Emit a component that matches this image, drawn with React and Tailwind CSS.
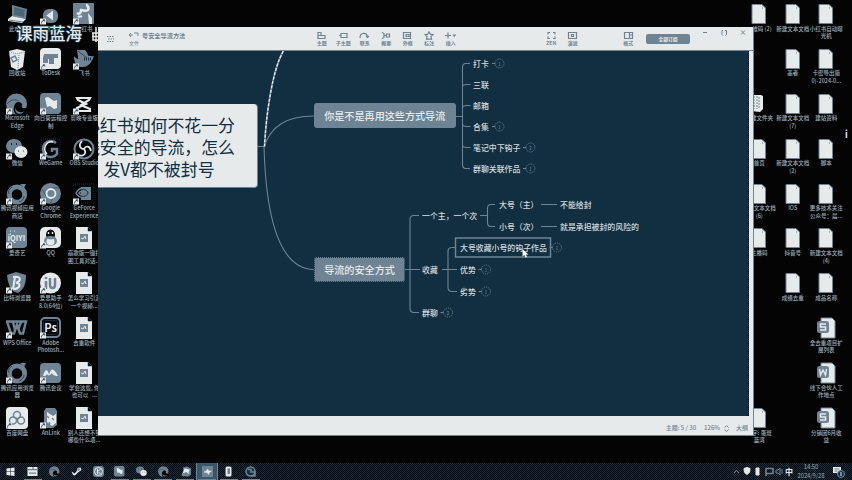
import React from 'react';

const M = '#6e8494';
const L = '#e6eaeb';
const D = '#112f41';
const K = '#040404';

// 22x22 desktop glyphs
const glyphs = {
  pc: (
    <>
      <path d="M6 2l15 4-1 10-14-3z" fill={M} />
      <path d="M8 4l11 3-1 7-10-2z" fill={D} opacity=".35" />
      <path d="M2 16l4-3 14 3-4 4-14-2z" fill={L} />
      <path d="M3 17l14 2" stroke={M} />
    </>
  ),
  play: (
    <>
      <rect x="3" y="6" width="15" height="14" rx="6" fill={M} />
      <path d="M8 12.500l4-3v6z" fill={L} stroke={L} strokeWidth="2" />
    </>
  ),
  flower: (
    <>
      <rect width="21" height="21" x="0" rx="1" fill={M} />
      <path d="M4 10c3 2 4-1 4-3 3 0 4 2 7 0 2-3-2-4-1-6" fill="none" stroke={L} strokeWidth="2.500" />
      <path d="M9 13c-2 1-3 1-4 0" stroke={L} strokeWidth="2" />
      <path d="M15 10l4 5v6h-3z" fill={L} />
    </>
  ),
  bin: (
    <>
      <path d="M3 3l8-2 8 2-2 16-6 3-6-3z" fill={L} />
      <path d="M3 4l8 2 8-2M13 7l-1 13" stroke={M} fill="none" strokeDasharray="1 1" />
      <path d="M5 10l4-2 2 4-4 2z" fill="none" stroke={M} strokeWidth="1.500" />
    </>
  ),
  todesk: (
    <>
      <rect width="21" height="21" rx="4" fill={L} />
      <path d="M4 6h14v4h-4v6H9v-5H8v4H3v-5z" fill={M} />
    </>
  ),
  bird: (
    <>
      <path d="M4 2h8c3 3 3 6 4 9-2 4-6 6-10 6z" fill={M} />
      <path d="M1 8c5 6 9 3 11 1 4-3 6 0 9-1-2 6-6 12-13 11-4 0-7-4-7-11z" fill={M} />
      <path d="M5 3l9 7" stroke={D} strokeWidth=".7" />
      <path d="M11 11h8" stroke={D} strokeWidth="3" strokeDasharray="1 1" />
    </>
  ),
  edge: (
    <>
      <circle cx="10.500" cy="11" r="10.500" fill={M} />
      <path d="M9 11a4 4 0 0 1 7 0c0 2-1 3 1 4h4v4l-6 3c-7 1-9-5-6-11z" fill={K} />
      <path d="M9 15c2 5 7 5 10 3-5 5-10 3-10-3z" fill={M} />
      <path d="M1 11c4-5 8-5 12-3" fill="none" stroke={D} strokeWidth=".6" />
    </>
  ),
  flag: (
    <>
      <rect width="21" height="21" rx="4" fill={M} />
      <path d="M5 5l3-1 6 4 3-1v8l-3 1-4-3-3 1z" fill={L} />
    </>
  ),
  cut: <path d="M4 5h13l-1 2-8 5 9 4v2H4v-3l9-4-8-4z" fill="none" stroke={L} strokeWidth="2.200" />,
  wechat: (
    <>
      <ellipse cx="8" cy="8" rx="8" ry="7" fill={M} />
      <ellipse cx="15" cy="14" rx="6.500" ry="6" fill={L} />
      <path d="M5 6h1M10 6h1" stroke={K} strokeWidth="1.500" />
      <path d="M12 13h1M17 13h1" stroke={M} strokeWidth="1.500" />
    </>
  ),
  wegame: (
    <>
      <rect x="1" y="1" width="19" height="20" fill="none" stroke={D} strokeDasharray="1 1" />
      <path d="M16 5a8 8 0 1 0 1 11v-5h-5v3" fill="none" stroke={M} strokeWidth="2.500" />
      <path d="M13 4a7 7 0 0 0-6 12" fill="none" stroke={L} strokeWidth="1.500" />
    </>
  ),
  obs: (
    <>
      <circle cx="11" cy="11" r="9.500" fill={K} stroke={M} strokeWidth="2" />
      <path d="M9 3c-4 4-2 8 2 8M18 13c-1-5-5-6-7-2M6 17c5 2 8-2 5-6" fill="none" stroke={L} strokeWidth="1.700" />
    </>
  ),
  ring: (
    <>
      <circle cx="11" cy="11.500" r="7.700" fill="none" stroke={M} strokeWidth="4.800" />
      <path d="M6 4c-3 2-4 4-3 7M13 19c3-1 5-3 5-6" fill="none" stroke={D} strokeWidth=".7" />
      <path d="M14 1l4 4 2-4z" fill={M} />
    </>
  ),
  chrome: (
    <>
      <circle cx="10.500" cy="10.500" r="10.500" fill={M} />
      <path d="M11 5h9M6 13L2 6M14 13l-4 8" stroke={D} strokeWidth=".5" />
      <circle cx="11" cy="10.500" r="4.500" fill={M} stroke={L} strokeWidth="1.800" />
    </>
  ),
  nvidia: (
    <>
      <rect y="1" width="21" height="19" fill={K} stroke={D} strokeDasharray="1 1" />
      <path d="M8 4h10v13H8z" fill={M} />
      <path d="M3 10c4-7 11-6 13 0-3 6-10 6-13 0zM6 10c2-3 6-3 7 0-2 3-5 3-7 0z" fill="none" stroke={M} strokeWidth="1.500" />
      <path d="M8 7c3-2 6 0 7 3-1 3-4 4-7 3" fill="none" stroke={D} />
    </>
  ),
  qiyi: (
    <>
      <rect width="21" height="21" rx="4" fill={M} />
      <text x="10.500" y="14" textAnchor="middle" fontSize="7.500" fontWeight="700" fill={L}>iQIYI</text>
      <path d="M4 4h1M8 4h1M4 7h1" stroke={L} />
    </>
  ),
  qq: (
    <>
      <rect width="21" height="21" rx="5" fill={L} />
      <ellipse cx="10.500" cy="8" rx="4.500" ry="5.500" fill={K} />
      <ellipse cx="10.500" cy="14" rx="6.500" ry="5" fill={M} />
      <ellipse cx="10.500" cy="14.500" rx="4" ry="4" fill={L} />
      <path d="M6 10q5 3 9 0" stroke={M} strokeWidth="2" fill="none" />
      <path d="M8.500 5v2M12.500 5v2" stroke={L} strokeWidth="1.500" />
    </>
  ),
  shield: (
    <>
      <path d="M1 3l9-3 10 3c0 9-2 14-8 18-7-1-10-8-11-18z" fill={M} />
      <path d="M7 5c9-1 8 4 3 6 6 0 4 6-3 6M9 5l-2 12" fill="none" stroke={L} strokeWidth="2" />
    </>
  ),
  iu: (
    <>
      <circle cx="10.500" cy="11" r="10.500" fill={L} />
      <path d="M6 9v8M6 5v2M10 6v7c0 4 5 4 5 0V6" fill="none" stroke={M} strokeWidth="2.500" />
    </>
  ),
  doc: (
    <>
      <path d="M3 0h12l4 4v18H3z" fill={L} />
      <path d="M15 0l4 4h-4z" fill={K} stroke={D} strokeWidth=".5" />
      <rect x="7" y="7" width="8" height="8" fill={M} />
      <path d="M8 11l2 1 2-3 1 3" fill="none" stroke={L} />
    </>
  ),
  wps: <path d="M1 4.500h19l-3 12h-3l-3-9-3 9H5zM7 5l2 8M15 5l-3 8" fill="none" stroke={M} strokeWidth="2.400" />,
  ps: (
    <>
      <rect x="1" y="1" width="19" height="19" rx="4" fill={K} stroke={M} strokeWidth="2" />
      <rect x="3.500" y="3.500" width="14" height="14" rx="2" fill={K} stroke={D} />
      <text x="10.500" y="14.500" textAnchor="middle" fontSize="11" fontWeight="600" fill={L}>Ps</text>
    </>
  ),
  meet: (
    <>
      <rect y="1" width="21" height="20" rx="4" fill={M} />
      <path d="M3 14c2-8 5-7 6-1 2-8 5-7 9 1-4 0-5-1-6-3-2 3-4 3-5 1-1 2-2 2-4 2z" fill={L} />
    </>
  ),
  baidu: (
    <>
      <rect width="22" height="22" rx="4" fill={L} />
      <circle cx="11" cy="8" r="3.500" fill="none" stroke={M} strokeWidth="1.500" />
      <circle cx="7" cy="13.500" r="3.500" fill="none" stroke={M} strokeWidth="1.500" />
      <circle cx="15" cy="13.500" r="3.500" fill="none" stroke={M} strokeWidth="1.500" />
    </>
  ),
  phone: (
    <>
      <path d="M6 1h9l2 3v14l-4 3H6l-2-3V4z" fill={M} />
      <path d="M7 5l6 4 3-2v9l-4 3-5-4z" fill={L} />
      <path d="M7 9l2 2M12 11l2 2M9 15l1 2" stroke={M} strokeWidth="1.300" />
    </>
  ),
  page: (
    <>
      <path d="M4 1.500h10l3.500 3.500v15.500H4z" fill={L} stroke={M} />
      <path d="M14 5h1" stroke={M} />
    </>
  ),
  folder: (
    <>
      <path d="M3 2h10l2 1v13l-3 3-9-1z" fill={L} />
      <path d="M6 3v13M9 3v13M11 4v12" stroke={M} strokeDasharray="2 1" />
    </>
  ),
  s: (
    <>
      <path d="M6 1h11l3 3v17H6z" fill={L} stroke={M} />
      <rect x="2" y="4" width="12" height="12" rx="2.500" fill={M} />
      <path d="M11 7H5.500v3h5v3H5" fill="none" stroke={L} strokeWidth="1.500" />
    </>
  ),
  w: (
    <>
      <path d="M6 1h11l3 3v17H6z" fill={L} stroke={M} />
      <rect x="2" y="4" width="12" height="12" rx="2.500" fill={M} />
      <path d="M4.500 7l1 6 2.500-5 2.500 5 1-6" fill="none" stroke={L} strokeWidth="1.400" />
    </>
  ),
};

const leftCols = [
  [
    ['pc', '此电脑'], ['bin', '回收站'], ['edge', 'Microsoft\nEdge', 1], ['wechat', '微信', 1], ['ring', '腾讯视频应用\n商店', 1],
    ['qiyi', '爱奇艺', 1], ['shield', '比特浏览器', 1], ['wps', 'WPS Office', 1], ['ring', '腾讯应用浏览\n器', 1], ['baidu', '百度网盘', 1],
  ],
  [
    ['play', '腾讯视频', 1], ['todesk', 'ToDesk', 1], ['flag', '向日葵远程控\n制', 1], ['wegame', 'WeGame', 1], ['chrome', 'Google\nChrome', 1],
    ['qq', 'QQ', 1], ['iu', '爱思助手\n8.0(64位)', 1], ['ps', 'Adobe\nPhotosh...', 1], ['meet', '腾讯会议', 1], ['phone', 'AnLink', 1],
  ],
  [
    ['flower', '小红书', 1], ['bird', '飞书', 1], ['cut', '剪映专业版', 1], ['obs', 'OBS Studio', 1], ['nvidia', 'GeForce\nExperience', 1],
    ['doc', '高歌版一键打\n图工具对话...'], ['doc', '怎么学习引流\n一个视频...'], ['doc', '去重软件'], ['doc', '学会这些, 你\n也可以   ...'], ['doc', '别人还想不到\n哪些什么项...'],
  ],
];

const rightCols = [
  [
    ['page', '二维码 (2)'], null, ['folder', '新建文件夹'], ['page', '首页'], ['page', '新建文本文档\n(6)'],
    ['page', '主播码'], null, null, null, ['page', '文字: 蛋斑\n蓝湾'],
  ],
  [
    ['page', '新建文本文档'], ['page', '墨者'], ['page', '新建文本文档\n(7)'], ['page', '新建文本文档\n(2)'], ['page', 'IOS'],
    ['page', '抖音号'], ['page', '成绩去重'], null, null, null,
  ],
  [
    ['page', '小红书自动曝\n光机'], ['page', '卡密导出简\n0)-2024-0...'], ['page', '建站资料'], ['page', '脚本'], ['page', '更多技术关注\n公众号：晨...'],
    ['page', '新建文本文档\n(4)'], ['page', '成品名称'], ['s', '全去重项目扩\n展列表'], ['w', '线下合伙人工\n作地点'], ['s', '分销团6月收\n益'],
  ],
];

function Shortcut() {
  return (
    <svg width="7" height="7" viewBox="0 0 7 7" className="absolute left-0 bottom-0">
      <rect width="6" height="6" y=".5" fill={L} />
      <path d="M1.500 5.500c0-2 1-3 2.500-3M3 1.800h1.700v1.700" fill="none" stroke={D} strokeWidth=".8" />
    </svg>
  );
}

function DesktopGrid({ cols, className }) {
  return (
    <div className={`absolute top-[3px] flex ${className}`}>
      {cols.map((col, i) => (
        <div key={i} className="flex w-[33.5px] flex-col">
          {col.map((item, j) => (
            <div key={j} className="flex h-[44.9px] flex-col items-center">
              {item && (
                <>
                  <div className="relative h-[22px] w-[22px]">
                    <svg width="22" height="22" viewBox="0 0 22 22">{glyphs[item[0]]}</svg>
                    {item[2] && <Shortcut />}
                  </div>
                  <div className="mt-[0.5px] whitespace-pre text-center text-[5.5px] font-medium leading-[7.7px] text-[#9fb0bc]">{item[1]}</div>
                </>
              )}
            </div>
          ))}
        </div>
      ))}
    </div>
  );
}

const tools = [
  ['主题', <path d="M2 1.500h3v3H2zM2 4.500h7v3H2z" />],
  ['子主题', <path d="M3 2.500h6v4H3zM1 4.500h2" />],
  ['联系', <path d="M1 7C1 1 8 1 8.500 6M7 5l1.500 1.500L10 5" />],
  ['概要', <path d="M1 1.500l2 1v4l-2 1M3 4.500h2M5.500 3h3v3h-3z" />],
  ['外框', <path d="M1.500 1.500h7v6h-7zM4 3.500h3v2H4z" />],
  ['标注', <path d="M5 .8l1.300 2.400 2.700.4-2 1.800.5 2.800h-5l.5-2.800L1 3.600l2.700-.4z" />],
  ['插入', <path d="M3 1.500v6M0 4.500h6M8 3.500l1.200 1.500L10.500 3.500" />],
];

function Tool({ label, children, className = 'w-[21.5px]' }) {
  return (
    <div className={`flex flex-col items-center ${className}`}>
      <svg width="11" height="9" viewBox="0 0 11 9" fill="none" stroke={M} strokeWidth="1.200">{children}</svg>
      <span className="-mt-[0.5px] whitespace-nowrap text-[5px] font-bold leading-[6px]">{label}</span>
    </div>
  );
}

function TitleBar() {
  return (
    <div className="flex h-[24px] shrink-0 border-b border-[#6e8494] bg-[#e6eaeb] pt-[4px] text-[#6e8494]">
      <svg width="8" height="8" viewBox="0 0 8 8" className="ml-[9px] mt-[4px]" stroke={M} strokeDasharray="1.500 1">
        <path d="M0 1.500h7M1 4h6M0 6.500h7" />
      </svg>
      <div className="ml-[12px] flex w-[14px] flex-col items-center">
        <svg width="12" height="8" viewBox="0 0 12 8" fill="none" stroke={M}>
          <path d="M3 2L1 4l2 2M1 4h4M6 2h4v3" />
        </svg>
        <span className="text-[5px] leading-[8px]">文件</span>
      </div>
      <div className="w-[170px] pl-px whitespace-nowrap text-[6.2px] font-bold leading-[9px]">号安全导流方法</div>
      <div className="flex">
        {tools.map(([label, icon]) => <Tool key={label} label={label}>{icon}</Tool>)}
      </div>
      <div className="ml-[79px] flex">
        <Tool label="ZEN"><path d="M2 3.500v-2h2M7 1.500h2v2M9 5.500v2H7M4 7.500H2v-2" /></Tool>
        <Tool label="演说"><path d="M1.500 1.500h8v6h-8zM4.500 3.500h2v2h-2z" /></Tool>
      </div>
      <Tool label="格式" className="ml-[34px] w-[21.500px]"><path d="M1.500 1.500h8v6h-8zM6.500 1.500v6M6.500 4h3" /></Tool>
      <div className="ml-[7px] mt-[3px] flex h-[10px] w-[44px] items-center justify-center rounded-[2px] bg-[#6e8494] text-[4.800px] font-bold text-[#e6eaeb]">全部订阅</div>
      <svg width="46" height="8" viewBox="0 0 46 8" className="-mt-[2px] ml-[11px]" fill="none" stroke={M}>
        <path d="M1 3.500h4M21 1.500h-1v4l1 1M23 1.500h1.500v4l-1 1M39 1.500l4 4M43 1.500l-4 4" transform="translate(1 0)" />
      </svg>
    </div>
  );
}

// Map nodes: left edge, top edge, text, centre of the collapsed-count badge
const nodes = [
  ['left-[375px]', 'top-[6.5px]', '打卡', 401.5, 12.500, '1'],
  ['left-[375px]', 'top-[27.5px]', '三联'],
  ['left-[375px]', 'top-[48.5px]', '邮箱'],
  ['left-[375px]', 'top-[69.5px]', '合集', 401.5, 75.500, '1'],
  ['left-[375px]', 'top-[90.5px]', '笔记中下钩子', 432.5, 96.500, '2'],
  ['left-[375px]', 'top-[111.5px]', '群聊关联作品', 432.5, 117.500, '1'],
  ['left-[324px]', 'top-[159px]', '一个主，一个次'],
  ['left-[401px]', 'top-[148px]', '大号（主）'],
  ['left-[401px]', 'top-[170px]', '小号（次）'],
  ['left-[462px]', 'top-[148px]', '不能给封'],
  ['left-[462px]', 'top-[170px]', '就是承担被封的风险的'],
  ['left-[362px]', 'top-[191px]', '大号收藏小号的钩子作品', 459, 196.5, '1'],
  ['left-[324px]', 'top-[212.5px]', '收藏'],
  ['left-[362px]', 'top-[212.5px]', '优势', 388, 218.500, '1'],
  ['left-[362px]', 'top-[234.5px]', '劣势', 388, 240.500, '1'],
  ['left-[324px]', 'top-[255.5px]', '群聊', 350, 261.500, '2'],
];

function MindMap() {
  return (
    <div className="relative h-[365px] w-[651px] overflow-hidden border-r border-dotted border-black bg-[#112f41]">
      <svg width="651" height="365" className="absolute inset-0" fill="none" stroke={M} strokeWidth="1.100">
        <path d="M159 95.500h7M166 95.500C173 76 187 65 216 65M166 95.500C168 167 181 218 216 218.500" />
        <path d="M166.500 95.500C168 66 174 18 186 -1" stroke={M} strokeWidth="1.800" />
        <path d="M166.500 95.500C168 66 174 18 186 -1" stroke={L} strokeWidth="1.300" strokeDasharray="3 1.500" />
        <path d="M357 65.500h7M372 12.500h-4q-3.500 0-3.500 4v97q0 4 3.500 4h4M364.500 36q0-2.500 4-2.500h4M364.500 57q0-2.500 4-2.500h4M364.500 73q0 2.500 4 2.500h4M364.500 94q0 2.500 4 2.500h4" />
        <path d="M307 218.500h15M321 164.500h-5q-4 0-4 4v89q0 4 4 4h5" />
        <path d="M382 164.500h7M397 153.500h-4q-3.500 0-3.500 4v14q0 4 3.500 4h4M443 153.500h16M443 175.500h16" />
        <path d="M344 218.500h15M357 196.500h-3q-4 0-4 4v36q0 4 4 4h5" />
        <rect x="357.500" y="187" width="95" height="19" strokeWidth="1.500" />
        {nodes.filter((n) => n[3]).map((n, i) => (
          <g key={i}>
            <circle cx={n[3]} cy={n[4]} r="4.500" strokeWidth=".9" strokeDasharray="1.200 1.100" />
            <path d={`M${n[3] - 7.500} ${n[4]}h3`} />
            <text x={n[3]} y={n[4] + 2} textAnchor="middle" fontSize="5" fill={M} stroke="none">{n[5]}</text>
          </g>
        ))}
      </svg>
      <div className="absolute -left-[37px] top-[53px] h-[84px] w-[197px] rounded-[4px] border-b border-r border-[#6e8494] bg-[#e6eaeb] pt-[9.5px] text-center text-[16.9px] leading-[22.4px] text-[#112f41]">
        <div>小红书如何不花一分</div>
        <div>钱安全的导流，怎么</div>
        <div>发V都不被封号</div>
      </div>
      <div className="absolute left-[216px] top-[52px] flex h-[25px] w-[141.5px] items-center justify-center whitespace-nowrap rounded-[3px] bg-[#6e8494] text-[10.1px] font-medium text-[#e6eaeb]">你是不是再用这些方式导流</div>
      <div className="absolute left-[216px] top-[206px] flex h-[25px] w-[91px] items-center justify-center whitespace-nowrap rounded-[3px] bg-[#6e8494] text-[10.1px] font-medium text-[#e6eaeb] outline-1 -outline-offset-1 outline-dotted outline-[#112f41]">导流的安全方式</div>
      {nodes.map(([left, top, text], i) => (
        <div key={i} className={`absolute whitespace-nowrap text-[7.9px] font-medium leading-[11px] text-[#d3dadd] ${left} ${top}`}>{text}</div>
      ))}
      <svg width="7" height="9" viewBox="0 0 7 9" className="absolute left-[424px] top-[198px]">
        <path d="M.5 0v7.500l2-1.500 1 2.500 1.500-.5-1-2.500H6.500z" fill="#fff" />
      </svg>
    </div>
  );
}

const taskIcons = [
  ['win', false], ['explorer', true], ['edge', false], ['steam', false], ['k', false], ['flag', true],
  ['wechat', true], ['edge', true], ['cube', true], ['xmind', true], ['mobile', true], ['clock', true],
];

const taskGlyphs = {
  ...glyphs,
  win: <path d="M3 5l7-1v7H3zM11 4l8-1v8h-8zM3 12h7v7l-7-1zM11 12h8v8l-8-1z" fill={L} />,
  explorer: (
    <>
      <path d="M1 2h20v18H1z" fill={L} />
      <path d="M1 7h20M4 14h14M12 2v5" stroke={M} strokeWidth="2.500" />
    </>
  ),
  steam: (
    <>
      <path d="M1 11l6 4 4-4 2-7 6-1 2 5-7 5-6 6-4-1z" fill={L} />
      <circle cx="15" cy="7" r="2.500" fill={M} />
    </>
  ),
  k: (
    <>
      <rect width="22" height="22" rx="6" fill={M} />
      <circle cx="11" cy="11" r="8" fill={M} stroke={L} strokeWidth="2" />
      <path d="M9 6v10M15 6l-5 5 5 5" stroke={L} strokeWidth="2" fill="none" />
    </>
  ),
  cube: (
    <>
      <path d="M6 3l8-2 8 4v12l-5 4-14-1 1-6 3-2z" fill={M} />
      <path d="M9 5l10 2-2 9-4-4-8 3z" fill={L} />
    </>
  ),
  xmind: (
    <>
      <rect width="22" height="22" fill={M} />
      <path d="M4 12l5-2 2-4 3 4h5l-4 3-2 4-3-4z" fill={L} stroke={L} />
    </>
  ),
  mobile: (
    <>
      <rect x="5" y="1" width="12" height="20" rx="3" fill={L} />
      <path d="M9 5h5v11H9z" fill={M} />
    </>
  ),
  clock: (
    <>
      <circle cx="11" cy="11" r="9" fill={D} stroke={M} strokeWidth="3" />
      <path d="M6 7h6v5h8v8h-7" fill="none" stroke={M} strokeWidth="3" />
    </>
  ),
};

function Taskbar() {
  return (
    <div className="absolute bottom-0 left-0 flex h-[17px] w-[852px] bg-[repeating-conic-gradient(#06090c_0_25%,#102b3b_0_50%)] bg-[length:2px_2px] text-[#e6eaeb]">
      {taskIcons.map(([name, open], i) => (
        <div
          key={i}
          className={`flex w-[21.8px] flex-col items-center justify-end ${name === 'xmind' ? 'border-x border-[#6e8494] bg-[#38566a]' : ''}`}
        >
          <svg width="11" height="11" viewBox="0 0 22 22" className="mb-[2px]">{taskGlyphs[name]}</svg>
          <div className={`h-px w-[18px] ${open ? 'bg-[#6e8494]' : ''}`} />
        </div>
      ))}
      <div className="ml-auto flex items-center">
        <svg width="51" height="11" viewBox="0 0 51 11" fill="none" stroke={L} strokeWidth="1">
          <path d="M2 7l2.500-2.500L7 7" stroke={M} />
          <path d="M12 2.500l3-1 3 1c0 4-1 5-3 6-2-1-3-2-3-6z" fill={L} />
          <path d="M24 2h3v7h-3z" fill={L} />
          <path d="M34 2.500h7v5h-7zM34 5v5" stroke={M} strokeWidth="1.500" />
          <path d="M44 4h2l2-2v7l-2-2h-2zM50 3v5" stroke={M} />
        </svg>
        <span className="ml-[2px] w-[10px] text-[8px] font-bold leading-none">中</span>
        <div className="w-[32px] text-center text-[5.8px] leading-[8.500px] text-[#9fb0bc]">
          <div>14:50</div>
          <div className="whitespace-nowrap">2024/9/28</div>
        </div>
        <svg width="13" height="13" viewBox="0 0 13 13" className="ml-[5px] mr-[7px]">
          <path d="M1 2h8v6H7L5 10V8H1z" fill={L} />
          <path d="M2.500 4h5M2.500 6h3" stroke={M} />
          <circle cx="9" cy="9" r="3.500" fill={D} stroke={M} />
          <path d="M9 7v4" stroke={L} />
        </svg>
      </div>
    </div>
  );
}

export default function App() {
  return (
    <div className="relative h-[480px] w-[852px] overflow-hidden bg-[#040404] font-['Noto_Sans_CJK_SC',sans-serif]">
      <DesktopGrid cols={leftCols} className="left-[0.5px]" />
      <DesktopGrid cols={rightCols} className="left-[742.5px]" />

      <div className="absolute left-[16px] top-[22.5px] whitespace-nowrap text-[16.500px] font-medium leading-[20px] text-[#e6eaeb] [text-shadow:1px_0_#112f41,-1px_0_#112f41,0_1px_#112f41,0_-1px_#112f41]">课雨蓝海</div>
      <svg width="6" height="17" viewBox="0 0 6 17" className="absolute left-[92px] top-[26px]" fill="none" stroke={L} strokeWidth="1.500">
        <path d="M4 1v15M0 7h6M1 7v7h5M0 10.500h6" />
      </svg>
      <div className="absolute left-[845px] top-[129px] text-[9px] font-bold leading-[11px] text-[#e6eaeb]">i</div>

      <div className="absolute left-[98px] top-[27px] flex h-[409px] w-[656px] flex-col border-b border-r border-[#6e8494] bg-[#e6eaeb]">
        <TitleBar />
        <MindMap />
        <div className="flex flex-1 items-center justify-end whitespace-nowrap pt-[5px] pr-[5px] text-[6px] font-medium leading-[8px] text-[#6e8494]">
          <span>主题: 5 / 30</span>
          <span className="ml-[8px]">126%</span>
          <svg width="5" height="7" viewBox="0 0 5 7" className="mx-[4px]" fill="none" stroke={M}>
            <path d="M.5 2.500l2-2 2 2M.5 4.500l2 2 2-2" />
          </svg>
          <span className="ml-[3px]">大纲</span>
        </div>
      </div>

      <Taskbar />
    </div>
  );
}
